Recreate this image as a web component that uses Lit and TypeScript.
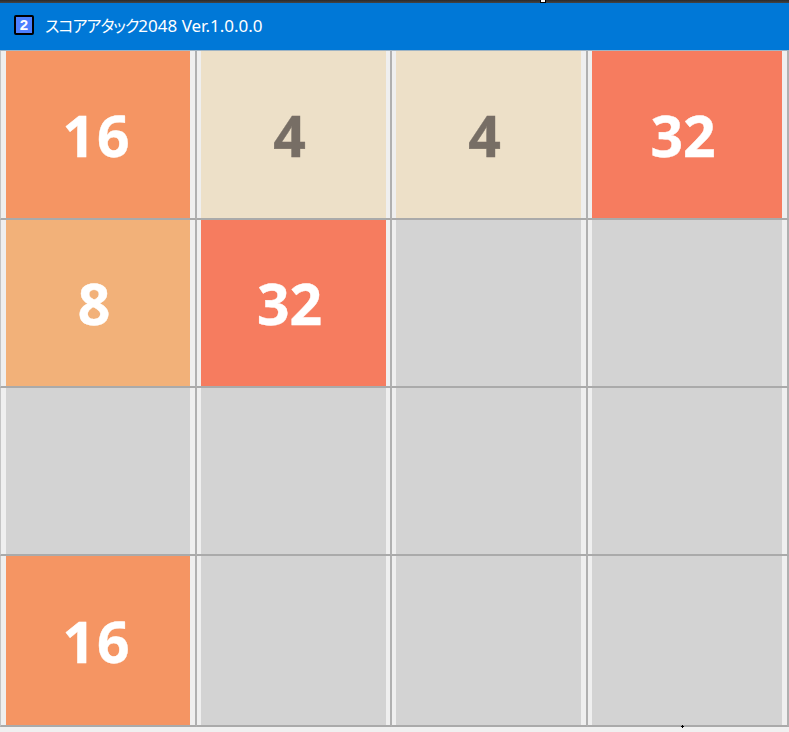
import { LitElement, html, css } from "lit";
import { customElement } from "lit/decorators.js";

const BOARD = [
  [16, 4, 4, 32],
  [8, 32, 0, 0],
  [0, 0, 0, 0],
  [16, 0, 0, 0],
];

@customElement("app-root")
export class AppRoot extends LitElement {
  static styles = css`
    :host {
      display: block;
      width: 789px;
      height: 732px;
      overflow: hidden;
      position: relative;
      background: #f0f0f0;
      font-family: "Noto Sans", "Noto Sans CJK JP", sans-serif;
    }
    .top { height: 3px; background: linear-gradient(#2a2a2a, #444); }
    .title {
      height: 48px;
      box-sizing: border-box;
      background: #0078d7;
      color: #fff;
      display: flex;
      align-items: center;
      padding: 0 0 3px 14px;
      gap: 11px;
      border-bottom: 1px solid #9fb4c4;
    }
    .t { display: flex; align-items: baseline; font-size: 17px; }
    .kana {
      font-family: "Noto Sans CJK JP", sans-serif;
      font-size: 16px;
      font-feature-settings: "palt";
      letter-spacing: -1px;
    }
    .icon {
      width: 20px; height: 20px; box-sizing: border-box;
      border: 2px solid #000; border-radius: 2px;
      background: #4d80ff; color: #fff;
      font: bold 15px/16px "Liberation Sans", sans-serif;
      text-align: center;
    }
    .board {
      display: grid;
      grid-template-columns: 197px 195px 196px 201px;
      grid-template-rows: 169px 168px 168px 171px;
    }
    .cell {
      box-sizing: border-box;
      border-right: 2px solid #b0b0b0;
      border-bottom: 2px solid #aaaaaa;
      background: #efefef;
      padding: 0 5px 0 4px;
      display: flex;
    }
    .cell:nth-child(4n + 1) { padding-left: 5px; border-left: 1px solid #c4c4c4; }
    .cell:nth-child(4n + 2) { padding-right: 4px; }
    .tile {
      flex: 1;
      display: flex;
      align-items: center;
      justify-content: center;
      box-sizing: border-box;
      padding-right: 8px;
      background: #d3d3d3;
      font-weight: 700;
      font-size: 57px;
      -webkit-text-stroke: 0.4px currentColor;
      color: #fff;
    }
    .v16 { background: #f59563; letter-spacing: 2px; padding-right: 2px; }
    .v4 { background: #ede0c8; color: #776e65; }
    .v32 { background: #f67c5f; }
    .v8 { background: #f2b179; }
    .grip {
      position: absolute; left: 540px; top: 0;
      width: 6px; height: 3px; box-sizing: border-box;
      background: #fff; border: 1px solid #000; border-top: none;
    }
    .plus {
      position: absolute; left: 681px; top: 725px; width: 3px; height: 3px;
      background: linear-gradient(#000, #000) center/3px 1px no-repeat,
        linear-gradient(#000, #000) center/1px 3px no-repeat;
    }
  `;

  render() {
    return html`
      <div class="top"></div>
      <div class="title">
        <div class="icon">2</div>
        <span class="t"><span class="kana">スコアアタック</span>2048 Ver.1.0.0.0</span>
      </div>
      <div class="board">
        ${BOARD.flat().map(
          (v) => html`<div class="cell"><div class="tile ${v ? `v${v}` : ""}">${v || ""}</div></div>`
        )}
      </div>
      <div class="grip"></div>
      <div class="plus"></div>
    `;
  }
}
